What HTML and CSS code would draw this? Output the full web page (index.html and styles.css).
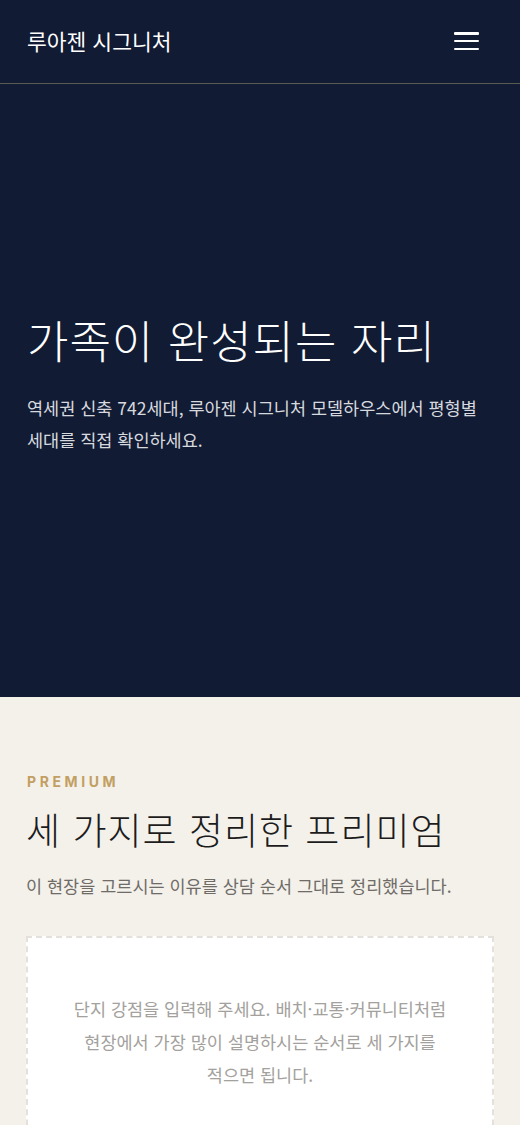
FILE: index.html
```html
<!DOCTYPE html>
<html lang="ko">
<head>
<meta charset="utf-8">
<meta name="viewport" content="width=device-width, initial-scale=1">
<title>루아젠 시그니처</title>
<link rel="stylesheet" href="styles.css">
</head>
<body>
<header class="site-header">
  <div class="brand">루아젠 시그니처</div>
  <button class="menu-btn" aria-label="메뉴">
    <span></span><span></span><span></span>
  </button>
</header>
<section class="hero">
  <h1 class="hero-title">가족이 완성되는 자리</h1>
  <p class="hero-sub">역세권 신축 742세대, 루아젠 시그니처 모델하우스에서 평형별 세대를 직접 확인하세요.</p>
</section>
<section class="premium">
  <div class="eyebrow">PREMIUM</div>
  <h2 class="sec-title">세 가지로 정리한 프리미엄</h2>
  <p class="sec-sub">이 현장을 고르시는 이유를 상담 순서 그대로 정리했습니다.</p>
  <div class="placeholder">
    <p>단지 강점을 입력해 주세요. 배치·교통·커뮤니티처럼 현장에서 가장 많이 설명하시는 순서로 세 가지를 적으면 됩니다.</p>
  </div>
</section>
</body>
</html>
```

FILE: styles.css
```css
* { box-sizing: border-box; }
html, body { margin: 0; padding: 0; }
body {
  font-family: "Noto Sans CJK KR", "Noto Sans", sans-serif;
  background: #f4f1eb;
  width: 520px;
  word-break: keep-all;
}
.site-header {
  height: 84px;
  background: #111b33;
  border-bottom: 1px solid #5a5a55;
  display: flex;
  align-items: center;
  justify-content: space-between;
  padding: 0 41px 0 27px;
}
.brand {
  color: #ffffff;
  font-size: 21.5px;
  font-weight: 400;
  margin-top: -3px;
}
.menu-btn {
  background: none;
  border: 0;
  padding: 0;
  width: 25px;
  height: 18px;
  display: flex;
  flex-direction: column;
  justify-content: space-between;
  cursor: pointer;
  margin-top: -1px;
}
.menu-btn span {
  display: block;
  height: 2.5px;
  background: #ffffff;
  border-radius: 1px;
}
.hero {
  background: #111b33;
  height: 613px;
  display: flex;
  flex-direction: column;
  justify-content: center;
  padding: 0 27px 40px;
}
.hero-title {
  margin: 26px 0 0;
  color: #ffffff;
  font-size: 45px;
  font-weight: 300;
  letter-spacing: 1px;
  line-height: 1.3;
}
.hero-sub {
  margin: 22px 0 0;
  color: #d7d9df;
  font-size: 17.5px;
  line-height: 32px;
  font-weight: 400;
}
.premium {
  padding: 75px 26px 0;
}
.eyebrow {
  color: #c29f62;
  font-family: "Inter", "Noto Sans", sans-serif;
  font-weight: 700;
  font-size: 14px;
  letter-spacing: 3.6px;
  line-height: 20px;
  padding-left: 1px;
}
.sec-title {
  margin: 13px 0 0;
  color: #1c1c1c;
  font-size: 37px;
  font-weight: 300;
  letter-spacing: 1px;
  line-height: 1.3;
}
.sec-sub {
  margin: 19px 0 0;
  color: #6f6c68;
  font-size: 17.5px;
  line-height: 28px;
}
.placeholder {
  margin-top: 36px;
  background: #ffffff;
  border: 2px dashed #e4e1dc;
  padding: 54px 36px 60px;
  min-height: 220px;
  text-align: center;
}
.placeholder p {
  margin: 0;
  color: #a3a19d;
  font-size: 17.5px;
  letter-spacing: 0;
  line-height: 33px;
}
```
